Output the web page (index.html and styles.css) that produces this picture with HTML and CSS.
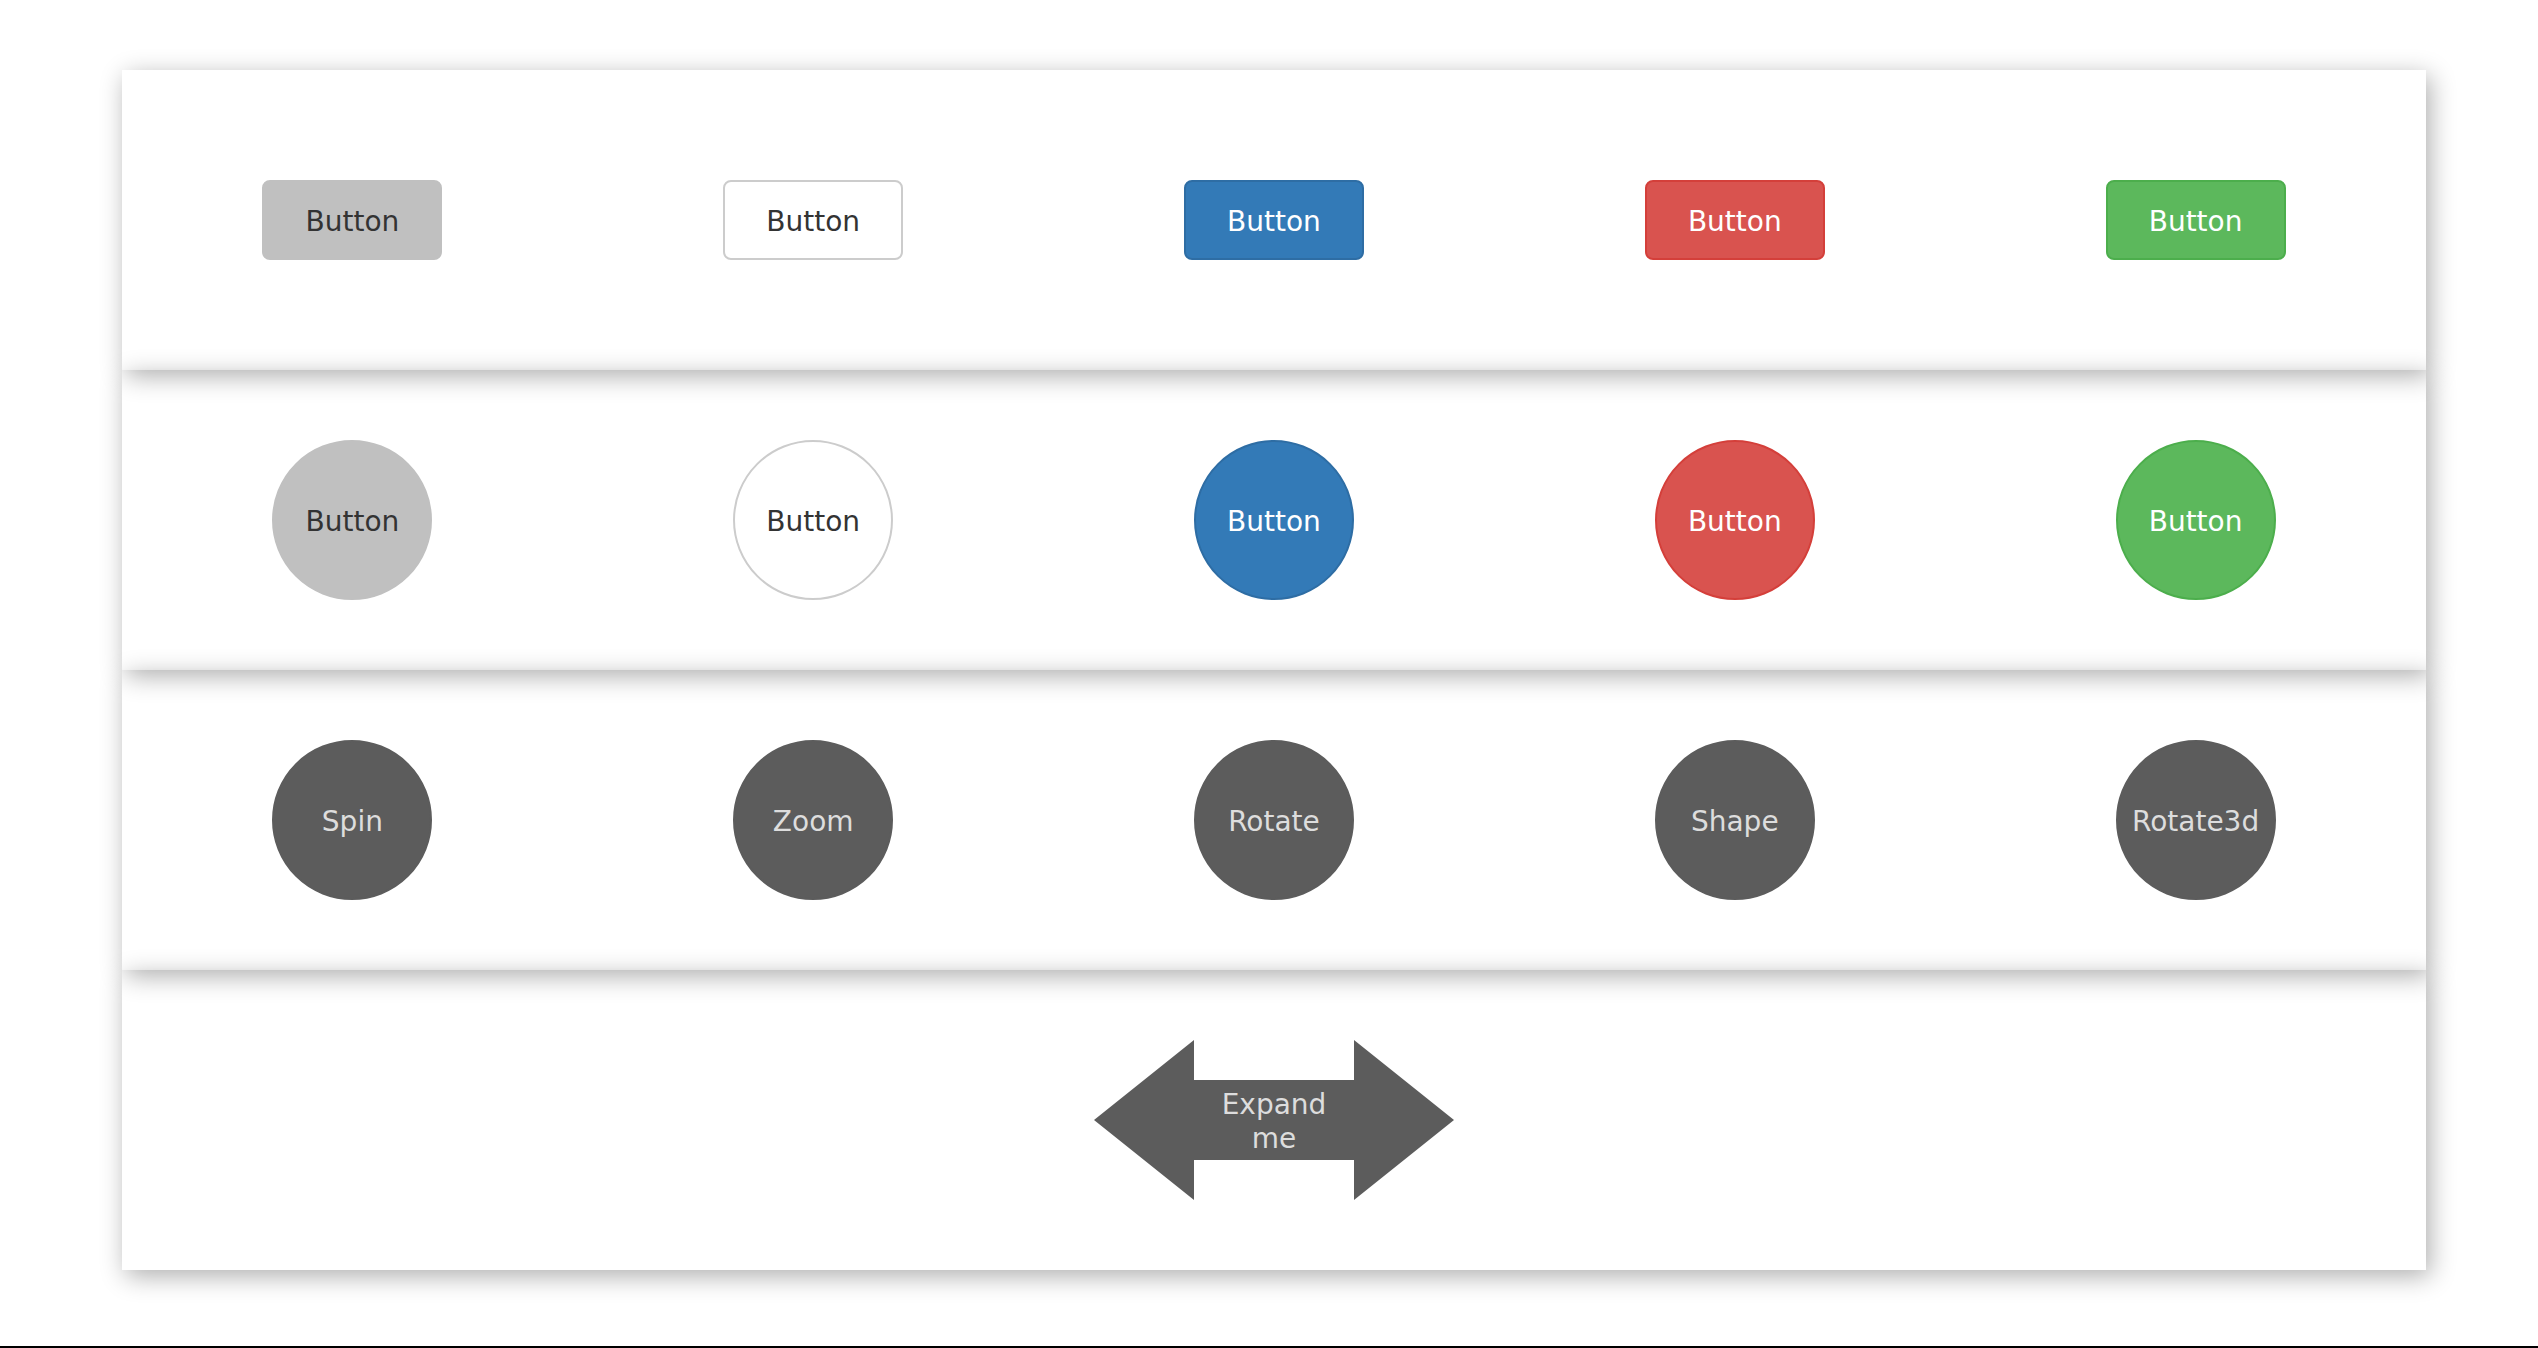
FILE: index.html
```html
<!DOCTYPE html>
<html lang="en">
<head>
<meta charset="utf-8">
<title>Buttons</title>
<link rel="stylesheet" href="styles.css">
</head>
<body>
<main class="page">
  <section class="card card-1">
    <div class="cell"><button class="btn btn-default">Button</button></div>
    <div class="cell"><button class="btn btn-outline">Button</button></div>
    <div class="cell"><button class="btn btn-primary">Button</button></div>
    <div class="cell"><button class="btn btn-danger">Button</button></div>
    <div class="cell"><button class="btn btn-success">Button</button></div>
  </section>
  <section class="card card-2">
    <div class="cell"><button class="btn round btn-default">Button</button></div>
    <div class="cell"><button class="btn round btn-outline">Button</button></div>
    <div class="cell"><button class="btn round btn-primary">Button</button></div>
    <div class="cell"><button class="btn round btn-danger">Button</button></div>
    <div class="cell"><button class="btn round btn-success">Button</button></div>
  </section>
  <section class="card card-3">
    <div class="cell"><button class="btn round btn-dark">Spin</button></div>
    <div class="cell"><button class="btn round btn-dark">Zoom</button></div>
    <div class="cell"><button class="btn round btn-dark">Rotate</button></div>
    <div class="cell"><button class="btn round btn-dark">Shape</button></div>
    <div class="cell"><button class="btn round btn-dark">Rotate3d</button></div>
  </section>
  <section class="card card-4">
    <div class="cell"></div>
    <div class="cell"></div>
    <div class="cell"><div class="expand"><span class="expand-text">Expand me</span></div></div>
    <div class="cell"></div>
    <div class="cell"></div>
  </section>
</main>
<div class="dock-edge"></div>
</body>
</html>
```
FILE: styles.css
```css
html, body {
  margin: 0;
  padding: 0;
  background: #ffffff;
}

body {
  min-height: 100vh;
  display: flex;
  flex-direction: column;
  font-family: "DejaVu Sans", Verdana, sans-serif;
}

.page {
  flex: 1;
  padding: 70px 0 0 122px;
}

.card {
  width: 2304px;
  height: 300px;
  display: grid;
  grid-template-columns: repeat(5, 1fr);
  align-items: center;
  justify-items: center;
  box-shadow: 4px 6px 24px rgba(0, 0, 0, 0.32);
  background: transparent;
  box-sizing: border-box;
}

.cell {
  display: flex;
  align-items: center;
  justify-content: center;
}

.btn {
  width: 180px;
  height: 80px;
  border-radius: 8px;
  border: 2px solid transparent;
  font-family: "DejaVu Sans", Verdana, sans-serif;
  font-size: 28px;
  line-height: 1;
  padding: 3px 0 0;
  margin: 0;
  box-sizing: border-box;
  cursor: pointer;
}

.round {
  width: 160px;
  height: 160px;
  border-radius: 50%;
}

.btn-default {
  background: #c0c0c0;
  border-color: #c0c0c0;
  color: #333333;
}

.btn-outline {
  background: #ffffff;
  border-color: #cccccc;
  color: #333333;
}

.btn-primary {
  background: #337ab7;
  border-color: #2e6da4;
  color: #ffffff;
}

.btn-danger {
  background: #d9534f;
  border-color: #d43f3a;
  color: #ffffff;
}

.btn-success {
  background: #5cb85c;
  border-color: #4cae4c;
  color: #ffffff;
}

.btn-dark {
  background: #5c5c5c;
  border-color: #5c5c5c;
  color: #dddddd;
}

.expand {
  position: relative;
  width: 160px;
  height: 80px;
  background: #5c5c5c;
  display: flex;
  align-items: center;
  justify-content: center;
}

.expand::before,
.expand::after {
  content: "";
  position: absolute;
  top: -40px;
  width: 0;
  height: 0;
  border-top: 80px solid transparent;
  border-bottom: 80px solid transparent;
}

.expand::before {
  left: -100px;
  border-right: 100px solid #5c5c5c;
}

.expand::after {
  right: -100px;
  border-left: 100px solid #5c5c5c;
}

.expand-text {
  display: block;
  width: 140px;
  padding-top: 3px;
  text-align: center;
  font-size: 28px;
  line-height: 34px;
  color: #dddddd;
}

.dock-edge {
  height: 2px;
  background: #000000;
}
```
